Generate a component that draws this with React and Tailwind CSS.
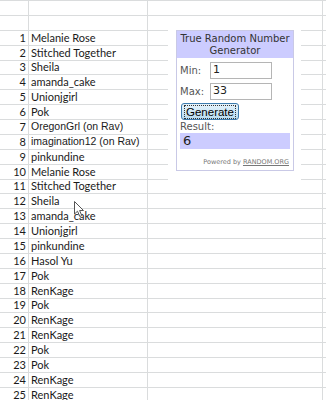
import React from 'react';

const names = [
  'Melanie Rose',
  'Stitched Together',
  'Sheila',
  'amanda_cake',
  'Unionjgirl',
  'Pok',
  'OregonGrl (on Rav)',
  'imagination12 (on Rav)',
  'pinkundine',
  'Melanie Rose',
  'Stitched Together',
  'Sheila',
  'amanda_cake',
  'Unionjgirl',
  'pinkundine',
  'Hasol Yu',
  'Pok',
  'RenKage',
  'Pok',
  'RenKage',
  'RenKage',
  'Pok',
  'Pok',
  'RenKage',
  'RenKage',
];

// rows 7 and 8 were pasted in with a different font
const arialRows = [7, 8];

const Row = ({ num, name }) => {
  const arial = arialRows.includes(num);
  return (
    <div className="flex h-[14.88px] border-t border-[#dadcdd] text-[11px] leading-none text-[#1a1a1a]">
      <div className="w-[29px] shrink-0 border-r border-[#dadcdd] flex items-end justify-end pr-[2px] pb-[2px] font-['Lato',sans-serif]">
        {num}
      </div>
      <div
        className={`w-[119px] shrink-0 border-r border-[#dadcdd] flex items-end pl-[2px] pb-[2px] whitespace-nowrap ${
          arial ? "font-['Liberation_Sans',Arial,sans-serif] text-[10.5px]" : "font-['Lato',sans-serif]"
        }`}
      >
        {name}
      </div>
      <div className="w-[175px] shrink-0 border-r border-[#dadcdd]" />
      <div className="flex-1" />
    </div>
  );
};

const Cursor = () => (
  <svg className="absolute left-[74px] top-[201px]" width="11" height="17" viewBox="0 0 11 17">
    <path
      d="M0.5 0.5 L0.5 13 L3.5 10.2 L5.8 15.5 L7.8 14.6 L5.6 9.5 L9.5 9.5 Z"
      fill="#fff"
      stroke="#555"
      strokeWidth="1"
    />
  </svg>
);

const RandomWidget = () => (
  <div className="absolute left-[168px] top-[23px] w-[133px] h-[158px] bg-white pl-[8px] pt-[7px]">
    <div className="w-[118px] h-[141px] border border-[#c9c9e6] bg-white font-['DejaVu_Sans',Verdana,sans-serif] text-[#555]">
      <div className="bg-[#ccccff] h-[27px] flex flex-col items-center justify-center text-[10px] leading-[12px] text-[#333]">
        <span>True Random Number</span>
        <span>Generator</span>
      </div>
      <div className="px-[3px] pt-[4px]">
        <div className="flex items-center h-[17px]">
          <span className="w-[30px] text-[10px]">Min:</span>
          <div className="w-[62px] h-[17px] border border-[#b5b5b5] text-[11px] text-[#222] pl-[2px] flex items-center">1</div>
        </div>
        <div className="flex items-center h-[17px] mt-[4px]">
          <span className="w-[30px] text-[10px]">Max:</span>
          <div className="w-[62px] h-[17px] border border-[#b5b5b5] text-[11px] text-[#222] pl-[2px] flex items-center">33</div>
        </div>
        <button className="mt-[3px] ml-[1px] w-[58px] h-[17px] rounded-[3px] border border-[#3d7bad] bg-gradient-to-b from-[#e6f3fb] to-[#b7dcf1] flex items-center justify-center">
          <span className="px-[1px] border border-dotted border-[#333] text-[11.5px] leading-[12px] text-black font-['Liberation_Sans',Arial,sans-serif]">
            Generate
          </span>
        </button>
        <div className="text-[10px] leading-[12px] mt-[1px]">Result:</div>
        <div className="bg-[#ccccff] h-[16px] flex items-center pl-[3px] text-[13px] text-[#222]">6</div>
        <div className="mt-[10px] text-right pr-[1px] text-[6.5px] leading-none text-[#777]">
          Powered by <span className="underline">RANDOM.ORG</span>
        </div>
      </div>
    </div>
  </div>
);

export default function App() {
  return (
    <div className="relative w-[326px] h-[400px] overflow-hidden bg-white">
      <Row num="" name="" />
      <Row num="" name="" />
      {names.map((n, i) => (
        <Row key={i} num={i + 1} name={n} />
      ))}
      <Row num="" name="" />
      <RandomWidget />
      <Cursor />
    </div>
  );
}
